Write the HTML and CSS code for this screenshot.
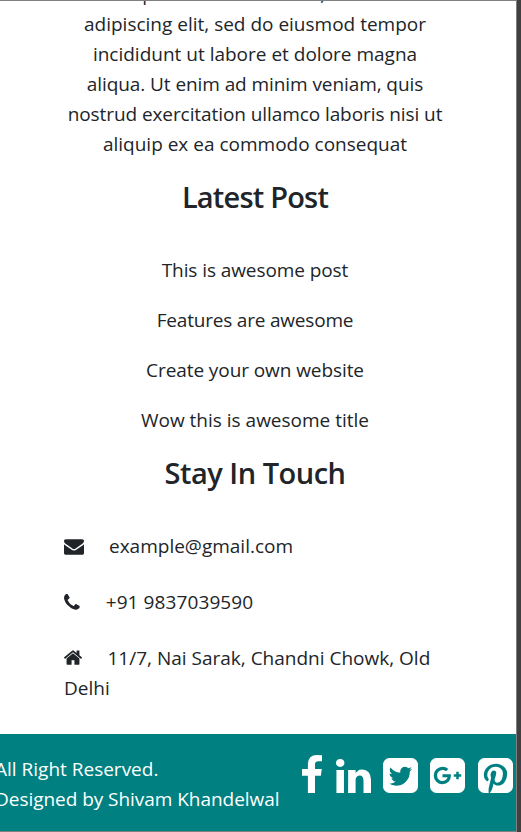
FILE: index.html
```html
<!DOCTYPE html>
<html lang="en">
<head>
<meta charset="utf-8">
<title>Footer</title>
<link rel="stylesheet" href="styles.css">
</head>
<body>
<div class="page">
  <main class="content">
    <p class="about">Lorem ipsum dolor sit amet, consectetur<br>adipiscing elit, sed do eiusmod tempor<br>incididunt ut labore et dolore magna<br><span class="snug">aliqua. Ut enim ad minim veniam, quis</span><br><span class="snug">nostrud exercitation ullamco laboris nisi ut</span><br>aliquip ex ea commodo consequat</p>
    <h2 class="latest">Latest Post</h2>
    <ul class="posts">
      <li class="snug">This is awesome post</li>
      <li class="tight">Features are awesome</li>
      <li class="snug">Create your own website</li>
      <li>Wow this is awesome title</li>
    </ul>
    <h2 class="touch">Stay In Touch</h2>
    <div class="contacts">
      <p><svg class="mail" viewBox="0 256 1792 1408"><path d="M1792 710v794q0 66-47 113t-113 47h-1472q-66 0-113-47t-47-113v-794q44 49 101 87 362 246 497 345 57 42 92.500 65.500t94.500 48 110 24.500h2q51 0 110-24.500t94.500-48 92.500-65.500q170-123 498-345 57-39 100-87zm0-294q0 79-49 151t-122 123q-376 261-468 325-10 7-42.500 31t-54 38.500-52 32.500-57.500 27-50 9h-2q-23 0-50-9t-57.500-27-52-32.500-54-38.500-42.500-31q-91-64-262-182.500t-205-142.500q-62-42-117-115.500t-55-136.500q0-78 41.500-130t118.500-52h1472q65 0 112.500 47t47.500 113z"/></svg><span class="email">example@gmail.com</span></p>
      <p><svg class="phone" viewBox="192 128 1408 1408"><path d="M1600 1240q0 27-10 70.500t-21 68.500q-21 50-122 106-94 51-186 51-27 0-53-3.500t-57.500-12.500-47-14.500-55.500-20.500-49-18q-98-35-175-83-127-79-264-216t-216-264q-48-77-83-175-3-9-18-49t-20.500-55.500-14.500-47-12.500-57.500-3.500-53q0-92 51-186 56-101 106-122 25-11 68.500-21t70.500-10q14 0 21 3 18 6 53 76 11 19 30 54t35 63.500 31 53.500q3 4 17.500 25t21.500 35.500 7 28.500q0 20-28.500 50t-62 55-62 53-28.500 46q0 9 5 22.500t8.500 20.500 14 24 11.500 19q76 137 174 235t235 174q2 1 19 11.500t24 14 20.500 8.500 22.500 5q18 0 46-28.500t53-62 55-62 50-28.500q14 0 28.500 7t35.500 21.500 25 17.500q25 15 53.500 31t63.500 35 54 30q70 35 76 53 3 7 3 21z"/></svg><span class="tel">+91 9837039590</span></p>
      <p><svg class="home" viewBox="89 253 1614 1283"><path d="M1472 992v480q0 26-19 45t-45 19h-384v-384h-256v384h-384q-26 0-45-19t-19-45v-480q0-1 .5-3t.5-3l575-474 575 474q1 2 1 6zm223-69l-62 74q-8 9-21 11h-3q-13 0-21-7l-692-577-692 577q-12 8-24 7-13-2-21-11l-62-74q-8-10-7-23.500t11-21.500l719-599q32-26 76-26t76 26l244 204v-195q0-14 9-23t23-9h192q14 0 23 9t9 23v408l219 182q10 8 11 21.500t-7 23.500z"/></svg><span class="street">11/7, Nai Sarak, Chandni Chowk, Old</span><br><span class="city">Delhi</span></p>
    </div>
  </main>
  <footer>
    <p class="legal"><span class="rights">All Right Reserved.</span><br><span class="designer">Designed by Shivam Khandelwal</span></p>
    <div class="social">
      <svg class="fb" viewBox="479 0 864 1664" preserveAspectRatio="none"><path d="M1343 12v264h-157q-86 0-116 36t-30 108v189h293l-39 296h-254v759h-306v-759h-255v-296h255v-218q0-186 104-288.500t277-102.500q147 0 228 12z"/></svg>
      <svg class="li" viewBox="128 148 1536 1468" preserveAspectRatio="none"><path d="M477 625v991h-330v-991h330zm21-306q1 73-50.500 122t-135.500 49h-2q-82 0-132-49t-50-122q0-74 51.500-122.500t134.500-48.500 133 48.500 51 122.500zm1166 729v568h-329v-530q0-105-40.500-164.500t-126.500-59.500q-63 0-105.500 34.500t-63.500 85.500q-11 30-11 81v553h-329q2-399 2-647t-1-296l-1-48h329v144h-2q20-32 41-56t56.500-52 87-43.500 114.500-15.500q171 0 275 113.500t104 332.500z"/></svg>
      <svg class="sq" viewBox="128 128 1536 1536"><path d="M1408 610q-56 25-121 34 68-40 93-117-65 38-134 51-61-66-153-66-87 0-148.500 61.500t-61.500 148.500q0 29 5 48-129-7-242-65t-192-155q-29 50-29 106 0 114 91 175-47-1-100-26v2q0 75 50 133.500t123 72.500q-29 8-51 8-13 0-39-4 21 63 74.500 104t121.500 42q-116 90-261 90-26 0-50-3 148 94 322 94 112 0 210-35.500t168-95 120.500-137 75-162 24.500-168.500q0-18-1-27 63-45 105-109zm256-194v960q0 119-84.500 203.500t-203.500 84.500h-960q-119 0-203.500-84.500t-84.500-203.500v-960q0-119 84.500-203.500t203.500-84.500h960q119 0 203.500 84.500t84.500 203.500z"/></svg>
      <svg class="sq" viewBox="128 128 1536 1536"><path d="M1045 905q0-26-6-64h-362v132h217q-3 24-16.500 50t-37.500 53-66.500 44.500-96.500 17.500q-99 0-169-71t-70-171 70-171 169-71q92 0 153 59l104-101q-108-100-257-100-160 0-272 112.500t-112 271.500 112 271.500 272 112.500q165 0 266.500-105t101.500-270zm345 46h109v-110h-109v-110h-110v110h-110v110h110v110h110v-110zm274-535v960q0 119-84.500 203.500t-203.500 84.500h-960q-119 0-203.500-84.500t-84.500-203.500v-960q0-119 84.500-203.500t203.500-84.500h960q119 0 203.500 84.500t84.500 203.500z"/></svg>
      <svg class="sq" viewBox="128 128 1536 1536"><path d="M1376 128q119 0 203.500 84.500t84.500 203.500v960q0 119-84.500 203.500t-203.500 84.500h-725q85-122 108-210 9-34 53-209 21 39 73.500 67t112.500 28q181 0 295.500-147.500t114.500-373.500q0-84-35-162.500t-96.500-139-152.500-97-197-36.500q-104 0-194.500 28.500t-153 76.500-107.500 109.500-66.500 128-21.500 132.500q0 102 39.500 180t116.500 110q13 5 23.500 0t14.500-19q10-44 15-61 6-23-11-42-50-62-50-150 0-150 103.500-256.500t270.500-106.500q149 0 232.500 81t83.500 210q0 168-67.500 286t-173.500 118q-60 0-97-43.500t-23-103.500q8-34 26.500-92.500t29.500-102 11-74.500q0-49-26.500-81.500t-75.500-32.500q-61 0-103.500 56.500t-42.500 139.500q0 72 24 121l-98 414q-24 100-7 254h-183q-119 0-203.500-84.500t-84.500-203.500v-960q0-119 84.500-203.500t203.500-84.500h960z"/></svg>
    </div>
  </footer>
</div>
</body>
</html>
```
FILE: styles.css
```css
* { box-sizing: border-box; }
body {
  margin: 0;
  height: 832px;
  overflow: hidden;
  background: #404040;
  font: 400 19px/30px "Open Sans", "Noto Sans", sans-serif;
  color: #212529;
}
.page {
  display: flex;
  flex-direction: column;
  width: 517px;
  height: 832px;
  overflow: hidden;
  background: #fff;
  border: solid #808080;
  border-width: 1px 1px 1px 0;
}
.content {
  height: 733px;
  flex: none;
  padding: 0 70px 0 64px;
  white-space: nowrap;
}
p, h2, ul { margin: 0; padding: 0; }
.about {
  display: flow-root;
  margin: -22px -20px 0;
  text-align: center;
}
.snug { letter-spacing: -0.08px; }
.tight { letter-spacing: -0.2px; }
h2 {
  margin-top: 20px;
  font-size: 29px;
  line-height: 36px;
  font-weight: 600;
  text-align: center;
  letter-spacing: -0.5px;
}
.latest { letter-spacing: -0.8px; }
.posts {
  display: grid;
  gap: 20px;
  margin-top: 40px;
  list-style: none;
  text-align: center;
}
.contacts {
  display: grid;
  gap: 26px;
  margin-top: 40px;
}
.contacts svg { fill: #212529; }
.mail { width: 20px; height: 16px; margin-right: 25px; vertical-align: -2px; }
.phone { width: 15.7px; height: 15.7px; margin-right: 26px; vertical-align: -1px; }
.home { width: 18px; height: 15px; margin-right: 25.5px; vertical-align: 0; }
.tel { letter-spacing: 0.1px; }
footer {
  display: flex;
  flex: 1;
  justify-content: space-between;
  padding: 20px 3.5px 0 0;
  background: #008080;
  color: #fff;
}
.legal { margin-left: -5px; white-space: nowrap; }
.designer { letter-spacing: -0.04px; }
.social {
  display: flex;
  align-items: flex-end;
  height: 39px;
  gap: 12.3px;
  fill: #fff;
}
.social svg { flex: none; display: block; }
.fb { width: 20px; height: 38px; margin-right: 1.2px; }
.li { width: 35px; height: 34px; }
.sq { width: 35px; height: 35px; }
```
